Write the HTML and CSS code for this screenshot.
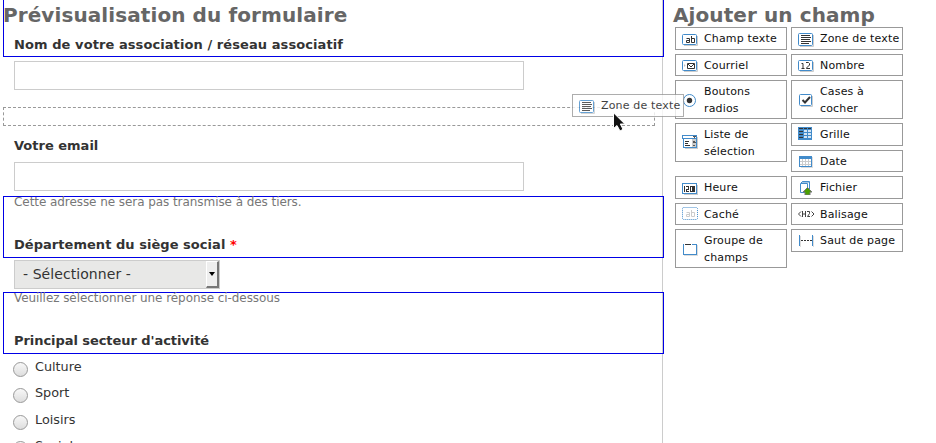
FILE: index.html
```html
<!DOCTYPE html>
<html lang="fr">
<head>
<meta charset="utf-8">
<title>Formulaire</title>
<link rel="stylesheet" href="styles.css">
</head>
<body>
<div class="page">
  <main class="preview">
    <section class="head first">
      <h1 class="title">Prévisualisation du formulaire</h1>
      <label class="label nom">Nom de votre association / réseau associatif</label>
    </section>
    <div class="input input-nom"></div>
    <div class="drop"></div>
    <label class="label email">Votre email</label>
    <div class="input input-email"></div>
    <section class="head second">
      <p class="desc">Cette adresse ne sera pas transmise à des tiers.</p>
      <label class="label dep">Département du siège social <span class="req">*</span></label>
    </section>
    <div class="select"><span class="select-text">- Sélectionner -</span><span class="arrow"></span></div>
    <section class="head third">
      <p class="desc">Veuillez sélectionner une réponse ci-dessous</p>
      <label class="label sect">Principal secteur d'activité</label>
    </section>
    <ul class="radios">
      <li><i class="radio"></i><span>Culture</span></li>
      <li><i class="radio"></i><span>Sport</span></li>
      <li><i class="radio"></i><span>Loisirs</span></li>
      <li><i class="radio"></i><span>Social</span></li>
    </ul>
  </main>
  <aside class="palette">
    <h2 class="title side">Ajouter un champ</h2>
    <div class="cols">
      <div class="col">
        <div class="btn a"><svg class="ic m4" viewBox="0 0 16 16"><use href="#frame"/><path d="M4.500 6.500h3v4h-3v-2h3M9.500 4v6.500h3v-4h-3" fill="none" stroke="#333"/></svg><span>Champ texte</span></div>
        <div class="btn b"><svg class="ic m3" viewBox="0 0 16 16"><use href="#frame"/><path d="M5.500 5.500h7v5h-7zM6 6l3 3 3-3" fill="none" stroke="#333"/><path d="M2 6l1.500 1.500L2 9" fill="#bbb"/></svg><span>Courriel</span></div>
        <div class="btn tall"><svg class="ic m11" viewBox="0 0 16 16"><circle cx="7.500" cy="8.500" r="6" fill="#fff" stroke="#428bca"/><circle cx="7.500" cy="8.500" r="2.700" fill="#333"/></svg><span>Boutons<br>radios</span></div>
        <div class="btn tall"><svg class="ic m10" viewBox="0 0 16 16" shape-rendering="crispEdges"><path d="M3 14.500h12.500V3" fill="none" stroke="#ccc"/><path d="M1.500 4.500h12v9h-12zM.5 1.500h14v3H.5z" fill="#fff" stroke="#428bca"/><path d="M10 5h4v9h-4z" fill="#ccc"/><path d="M3 7.500h4M3 9.500h3M3 11.500h5" stroke="#333"/><path d="M14.500 5v9M1 13.500h14" stroke="#428bca"/><path d="M10 2h4l-2 2zM10.500 8.500l1.500-2 1.500 2zM10.500 10.500l1.500 2 1.500-2z" fill="#555"/></svg><span>Liste de<br>sélection</span></div>
        <div class="btn a gap"><svg class="ic m4" viewBox="0 0 16 16" shape-rendering="crispEdges"><use href="#frame"/><path d="M2.500 5v6M4 5.500h2.500v2.500H4.500v2.500H7M8.500 5.500h2v5h-2zM11.500 5.500h1v5h-1z" fill="none" stroke="#333"/></svg><span>Heure</span></div>
        <div class="btn b"><svg class="ic m2" viewBox="0 0 16 16"><rect x=".5" y="1.500" width="15" height="12" rx="1" fill="#fff" stroke="#428bca" stroke-dasharray="1 1"/><path d="M4.500 6.500h3v4h-3v-2h3M9.500 4v6.500h3v-4h-3" fill="none" stroke="#ccc"/></svg><span>Caché</span></div>
        <div class="btn tall"><svg class="ic m11" viewBox="0 0 16 16" shape-rendering="crispEdges"><path d="M2 14.500h13.500V4" fill="none" stroke="#ddd"/><path d="M2 3.500h-.5v10h13v-10H10" fill="none" stroke="#428bca"/><path d="M3 3.500h6" stroke="#333"/></svg><span>Groupe de<br>champs</span></div>
      </div>
      <div class="col">
        <div class="btn a"><svg class="ic m4" viewBox="0 0 16 16"><use href="#page"/></svg><span>Zone de texte</span></div>
        <div class="btn b"><svg class="ic m3" viewBox="0 0 16 16"><use href="#frame"/><path d="M3.500 5.500h1.500v5M3.500 10.500h3M8 4.500h2.500l1 1v1.500l-3 3v.5H12" fill="none" stroke="#333"/></svg><span>Nombre</span></div>
        <div class="btn tall"><svg class="ic m11" viewBox="0 0 16 16"><path d="M3 14.500h11.500V4" fill="none" stroke="#ccc"/><rect x="1.500" y="2.500" width="12" height="11" rx="1" fill="#fff" stroke="#428bca"/><path d="M4.500 8l2.500 2.500 5-5.500" fill="none" stroke="#333" stroke-width="2"/></svg><span>Cases à<br>cocher</span></div>
        <div class="btn a"><svg class="ic m2" viewBox="0 0 16 16" shape-rendering="crispEdges"><path d="M0 1h14v13H0z" fill="#428bca"/><path d="M1 2.500h4M1 5.500h4M1 8.500h4M1 11.500h4" stroke="#333"/><path d="M6 2.500h7" stroke="#333" stroke-dasharray="3 1"/><path d="M6 5h7M6 8h7M6 11h7" stroke="#d4e5f5" stroke-width="2" stroke-dasharray="3 1"/></svg><span>Grille</span></div>
        <div class="btn b"><svg class="ic m2" viewBox="0 0 16 16" shape-rendering="crispEdges"><path d="M3 14.500h11.500V4" fill="none" stroke="#ddd"/><path d="M1.500 3.500h12v10h-12z" fill="#fff" stroke="#428bca"/><path d="M1 3h13v3H1z" fill="#428bca"/><path d="M2 8.500h11M2 11.500h11M4.500 6v7M7.500 6v7M10.500 6v7" stroke="#ccc"/></svg><span>Date</span></div>
        <div class="btn a"><svg class="ic m2" viewBox="0 0 16 16"><path d="M2.500 4.500l2-2h7v11h-9z" fill="#fff" stroke="#428bca"/><path d="M3 4.500h6.500v9M4 3h7" fill="none" stroke="#428bca"/><path d="M9.500 8.500l4.500 4.500h-2v3h-5v-3h-2z" fill="#4ba000" stroke="#777"/></svg><span>Fichier</span></div>
        <div class="btn b"><svg class="ic m2" viewBox="0 0 16 16"><path d="M3 5.500L.5 8 3 10.500M13.500 5.500L16 8l-2.500 2.500M4.500 5v6M7.500 5v6M4.500 8h3M9 5.500h2.500v2L9.500 10.500H12" fill="none" stroke="#444"/></svg><span>Balisage</span></div>
        <div class="btn a"><svg class="ic m3" viewBox="0 0 16 16" shape-rendering="crispEdges"><path d="M2.500 3v11M15.500 3v11" stroke="#ddd"/><path d="M1.500 2v11M14.500 2v11" stroke="#428bca"/><path d="M3 7.500h11" stroke="#333" stroke-dasharray="2 1"/></svg><span>Saut de page</span></div>
      </div>
    </div>
  </aside>
</div>
<div class="btn drag"><svg class="ic m4" viewBox="0 0 16 16"><use href="#page"/></svg><span>Zone de texte</span></div>
<svg class="cursor" viewBox="0 0 14 20"><path d="M1.500 .8v15.700l3.500-3 3 5.500 3-1.700-2.700-5.300h4.500z" fill="#111" stroke="#fff"/></svg>
<svg width="0" height="0" class="defs">
  <symbol id="frame" viewBox="0 0 16 16"><path d="M2 13.500h13.500V4" fill="none" stroke="#ccc"/><rect x=".5" y="2.500" width="14" height="10" rx="1" fill="#fff" stroke="#428bca"/></symbol>
  <symbol id="page" viewBox="0 0 16 16"><path d="M2 14.500h13.500V3" fill="none" stroke="#ccc"/><rect x=".5" y="1.500" width="14" height="12" rx="1" fill="#fff" stroke="#428bca"/><path d="M3 3.500h9M3 5.500h10M3 7.500h9M3 9.500h10M3 11.500h8" stroke="#333"/></symbol>
</svg>
</body>
</html>
```
FILE: styles.css
```css
* { box-sizing: border-box; }
body { margin: 0; height: 443px; overflow: hidden; background: #fff; color: #333; font-family: "DejaVu Sans", sans-serif; font-size: 12px; position: relative; }
.page { display: flex; height: 443px; overflow: hidden; }
.preview { width: 663px; flex: none; border-right: 1px solid #ccc; padding-left: 3px; }
.title { margin: 0; color: #666; font-size: 20px; letter-spacing: .09px; line-height: 24px; font-weight: bold; white-space: nowrap; }
.head { width: 661px; border: 1px solid #0000e6; position: relative; display: flex; flex-direction: column; }
.first { height: 57px; border-top: 0; }
.first .title { margin: 3px 0 0 -1px; }
.label { display: block; font-size: 13px; line-height: 18px; font-weight: bold; margin-left: 10px; white-space: nowrap; }
.nom { margin-top: 9px; letter-spacing: .08px; }
.input { width: 510px; height: 29px; border: 1px solid #ccc; margin-left: 11px; }
.input-nom { margin-top: 4px; }
.drop { width: 652px; height: 19px; border: 1px dashed #999; margin-top: 17px; }
.email { margin: 11px 0 0 11px; }
.input-email { margin-top: 7px; }
.second { height: 62px; margin-top: 5px; }
.third { height: 62px; margin-top: 3px; }
.desc { margin: -4px 0 0 10px; font-size: 12px; letter-spacing: -.065px; line-height: 18px; color: #777; white-space: nowrap; }
.dep, .sect { margin-top: 25px; }
.dep { letter-spacing: .04px; }
.sect { letter-spacing: -.06px; }
.req { color: #f00; }
.select { margin: 2px 0 0 11px; width: 206px; height: 29px; border: 1px solid #ccc; background: #e8e8e7; display: flex; justify-content: space-between; font-size: 14px; letter-spacing: .07px; line-height: 26px; padding-left: 8px; }
.arrow { width: 13px; background: #eee; border: 1px solid; border-color: #fff #777 #777 #fff; border-right-width: 2px; border-bottom-width: 2px; display: flex; align-items: center; justify-content: center; }
.arrow::after { content: ""; border: 3px solid transparent; border-top: 4px solid #000; border-bottom: 0; }
.radios { list-style: none; margin: 0; padding: 4px 0 0 10px; font-size: 12.800px; }
.radios li { display: flex; height: 26.400px; gap: 7px; line-height: 18px; }
.radio { width: 15px; height: 15px; margin-top: 4px; border-radius: 50%; border: 1px solid #999; background: linear-gradient(#f8f8f8, #ddd); }
.palette { padding: 3px 0 0 11px; }
.side { margin-left: -1px; }
.cols { display: flex; gap: 4px; margin-left: 1px; }
.col { display: flex; flex-direction: column; gap: 4px; width: 112px; }
.btn { width: 112px; border: 1px solid #999; background: #fff; display: flex; align-items: center; padding-left: 6px; gap: 6px; color: #111; font-size: 11px; letter-spacing: .16px; line-height: 17px; white-space: nowrap; }
.a { height: 23px; }
.b { height: 22px; }
.tall { height: 39px; }
.gap { margin-top: 10px; }
.ic { width: 16px; height: 16px; flex: none; align-self: flex-start; }
.m2 { margin-top: 2px; }
.m3 { margin-top: 3px; }
.m4 { margin-top: 4px; }
.m10 { margin-top: 10px; }
.m11 { margin-top: 11px; }
.drag { position: absolute; left: 572px; top: 94px; height: 23px; opacity: .8; }
.cursor { position: absolute; left: 612px; top: 112px; width: 14px; height: 20px; }
.defs { position: absolute; }
```
